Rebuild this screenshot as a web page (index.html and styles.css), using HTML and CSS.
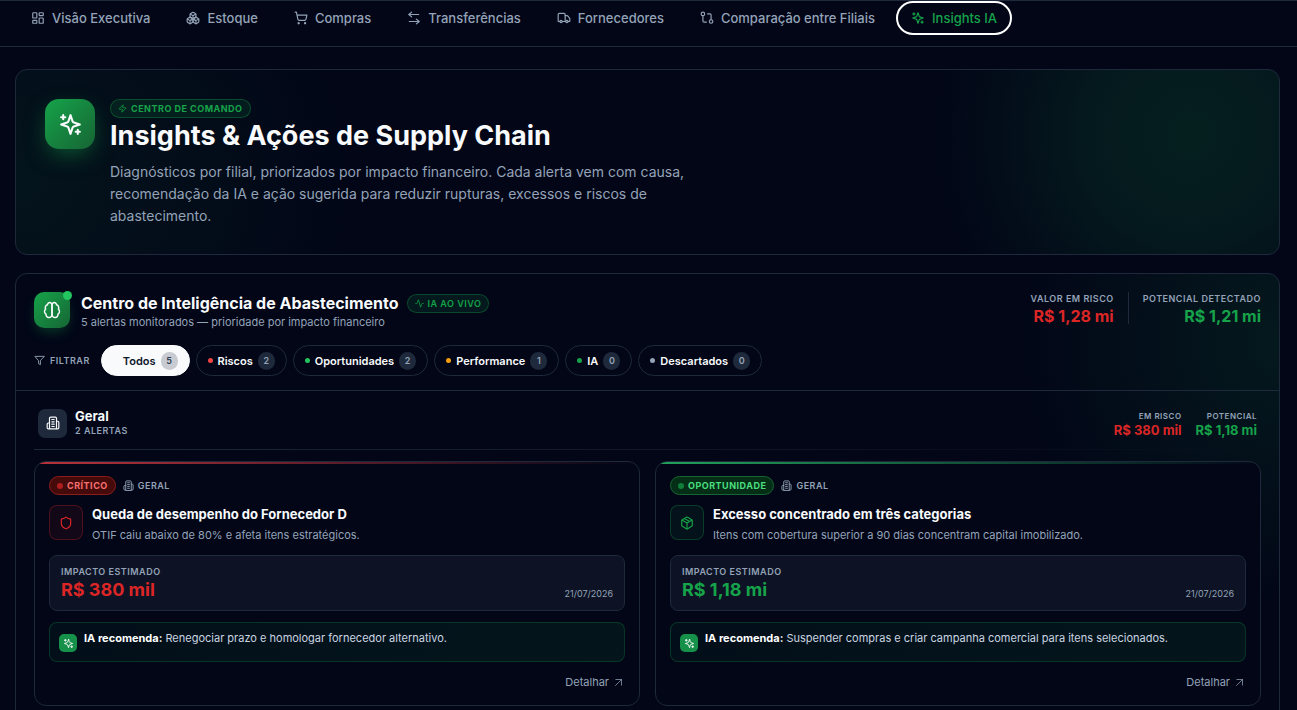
FILE: index.html
```
<!DOCTYPE html>
<html lang="pt-BR">

<head>
    <meta charset="utf-8">
    <meta name="viewport" content="width=device-width, initial-scale=1">
    <title>Insights IA</title>
    <link rel="stylesheet" href="styles.css">
</head>

<body>
    <svg class="sprite" aria-hidden="true">
        <symbol id="dashboard" viewBox="0 0 24 24">
            <rect x="3" y="3" width="7" height="9" rx="1" />
            <rect x="14" y="3" width="7" height="5" rx="1" />
            <rect x="14" y="12" width="7" height="9" rx="1" />
            <rect x="3" y="16" width="7" height="5" rx="1" />
        </symbol>
        <symbol id="boxes" viewBox="0 0 24 24">
            <path d="M2.97 12.92A2 2 0 0 0 2 14.63v3.24a2 2 0 0 0 .97 1.71l3 1.8a2 2 0 0 0 2.06 0L12 19v-5.5l-5-3-4.03 2.42Z" />
            <path d="m7 16.5-4.74-2.85M7 16.5l5-3M7 16.5v5.17" />
            <path d="M12 13.5V19l3.97 2.38a2 2 0 0 0 2.06 0l3-1.8a2 2 0 0 0 .97-1.71v-3.24a2 2 0 0 0-.97-1.71L17 10.5l-5 3Z" />
            <path d="m17 16.5-5-3M17 16.5l4.74-2.85M17 16.5v5.17" />
            <path d="M7.97 4.42A2 2 0 0 0 7 6.13v4.37l5 3 5-3V6.13a2 2 0 0 0-.97-1.71l-3-1.8a2 2 0 0 0-2.06 0l-3 1.8Z" />
            <path d="M12 8 7.26 5.15M12 8l4.74-2.85M12 13.5V8" />
        </symbol>
        <symbol id="cart" viewBox="0 0 24 24">
            <circle cx="8" cy="21" r="1" />
            <circle cx="19" cy="21" r="1" />
            <path d="M2.05 2.05h2l2.66 12.42a2 2 0 0 0 2 1.58h9.78a2 2 0 0 0 1.95-1.57l1.65-7.43H5.12" />
        </symbol>
        <symbol id="transfer" viewBox="0 0 24 24">
            <path d="m16 14 5 4-5 4M21 18H4M8 10 3 6l5-4M3 6h17" />
        </symbol>
        <symbol id="truck" viewBox="0 0 24 24">
            <path d="M14 18V6a2 2 0 0 0-2-2H4a2 2 0 0 0-2 2v11a1 1 0 0 0 1 1h2M15 18H9" />
            <path d="M19 18h2a1 1 0 0 0 1-1v-3.65a1 1 0 0 0-.22-.62l-3.48-4.35A1 1 0 0 0 17.52 8H14" />
            <circle cx="17" cy="18" r="2" />
            <circle cx="7" cy="18" r="2" />
        </symbol>
        <symbol id="compare" viewBox="0 0 24 24">
            <circle cx="5" cy="5" r="3" />
            <path d="M13 5h4a2 2 0 0 1 2 2v8" />
            <circle cx="19" cy="18" r="3" />
            <path d="M11 19H7a2 2 0 0 1-2-2V8" />
        </symbol>
        <symbol id="sparkles" viewBox="0 0 24 24">
            <path d="m12 3-1.91 5.81a2 2 0 0 1-1.28 1.28L3 12l5.81 1.91a2 2 0 0 1 1.28 1.28L12 21l1.91-5.81a2 2 0 0 1 1.28-1.28L21 12l-5.81-1.91a2 2 0 0 1-1.28-1.28Z" />
            <path d="M5 3v4M3 5h4M19 17v4M17 19h4" />
        </symbol>
        <symbol id="zap" viewBox="0 0 24 24">
            <path d="M4 14a1 1 0 0 1-.78-1.63l9.9-10.2a.5.5 0 0 1 .86.46l-1.92 6.02A1 1 0 0 0 13 10h7a1 1 0 0 1 .78 1.63l-9.9 10.2a.5.5 0 0 1-.86-.46l1.92-6.02A1 1 0 0 0 11 14z" />
        </symbol>
        <symbol id="brain" viewBox="0 0 24 24">
            <path d="M12 5a3 3 0 1 0-6 .13 4 4 0 0 0-2.53 5.77 4 4 0 0 0 .56 6.59A4 4 0 1 0 12 18Z" />
            <path d="M12 5a3 3 0 1 1 6 .13 4 4 0 0 1 2.53 5.77 4 4 0 0 1-.56 6.59A4 4 0 1 1 12 18Z" />
        </symbol>
        <symbol id="activity" viewBox="0 0 24 24">
            <path d="M22 12h-2.48a2 2 0 0 0-1.93 1.46l-2.35 8.36a.25.25 0 0 1-.48 0L9.24 2.18a.25.25 0 0 0-.48 0l-2.35 8.36A2 2 0 0 1 4.49 12H2" />
        </symbol>
        <symbol id="filter" viewBox="0 0 24 24">
            <path d="M22 3H2l8 9.46V19l4 2v-8.54Z" />
        </symbol>
        <symbol id="building" viewBox="0 0 24 24">
            <path d="M6 22V4a2 2 0 0 1 2-2h8a2 2 0 0 1 2 2v18ZM6 12H4a2 2 0 0 0-2 2v6a2 2 0 0 0 2 2h2M18 9h2a2 2 0 0 1 2 2v9a2 2 0 0 1-2 2h-2" />
            <path d="M10 6h4M10 10h4M10 14h4M10 18h4" />
        </symbol>
        <symbol id="shield" viewBox="0 0 24 24">
            <path d="M20 13c0 5-3.5 7.5-7.66 8.95a1 1 0 0 1-.67-.01C7.5 20.5 4 18 4 13V6a1 1 0 0 1 1-1c2 0 4.5-1.2 6.24-2.72a1.17 1.17 0 0 1 1.52 0C14.51 3.81 17 5 19 5a1 1 0 0 1 1 1z" />
        </symbol>
        <symbol id="package" viewBox="0 0 24 24">
            <path d="M11 21.73a2 2 0 0 0 2 0l7-4A2 2 0 0 0 21 16V8a2 2 0 0 0-1-1.73l-7-4a2 2 0 0 0-2 0l-7 4A2 2 0 0 0 3 8v8a2 2 0 0 0 1 1.73z" />
            <path d="M12 22V12M3.3 7 12 12l8.7-5M7.5 4.27l9 5.15" />
        </symbol>
        <symbol id="arrow" viewBox="0 0 24 24">
            <path d="M5 4h15v15M20 4 4 20" />
        </symbol>
    </svg>

    <nav class="tabs">
        <a class="tab" href="#"><svg class="icon"><use href="#dashboard" /></svg>Visão Executiva</a>
        <a class="tab" href="#"><svg class="icon"><use href="#boxes" /></svg>Estoque</a>
        <a class="tab" href="#"><svg class="icon"><use href="#cart" /></svg>Compras</a>
        <a class="tab" href="#"><svg class="icon"><use href="#transfer" /></svg>Transferências</a>
        <a class="tab" href="#"><svg class="icon"><use href="#truck" /></svg>Fornecedores</a>
        <a class="tab" href="#"><svg class="icon"><use href="#compare" /></svg>Comparação entre Filiais</a>
        <a class="tab active" href="#" aria-current="page"><svg class="icon"><use href="#sparkles" /></svg>Insights IA</a>
    </nav>

    <main>
        <section class="hero">
            <div class="hero-icon"><svg class="icon"><use href="#sparkles" /></svg></div>
            <div class="hero-text">
                <span class="badge"><svg class="icon"><use href="#zap" /></svg>CENTRO DE COMANDO</span>
                <h1>Insights &amp; Ações de Supply Chain</h1>
                <p>Diagnósticos por filial, priorizados por impacto financeiro. Cada alerta vem com causa, recomendação da IA e ação sugerida para reduzir rupturas, excessos e riscos de abastecimento.</p>
            </div>
        </section>

        <section class="panel">
            <header class="panel-head">
                <div class="panel-top">
                    <div class="panel-icon"><svg class="icon"><use href="#brain" /></svg></div>
                    <div class="panel-title">
                        <div class="title-row">
                            <h2>Centro de Inteligência de Abastecimento</h2>
                            <span class="badge live"><svg class="icon"><use href="#activity" /></svg>IA AO VIVO</span>
                        </div>
                        <p>5 alertas monitorados — prioridade por impacto financeiro</p>
                    </div>
                    <dl class="totals">
                        <div>
                            <dt>VALOR EM RISCO</dt>
                            <dd class="red">R$ 1,28 mi</dd>
                        </div>
                        <div>
                            <dt>POTENCIAL DETECTADO</dt>
                            <dd class="green">R$ 1,21 mi</dd>
                        </div>
                    </dl>
                </div>
                <div class="filters">
                    <span class="filter-label"><svg class="icon"><use href="#filter" /></svg>FILTRAR</span>
                    <button type="button" class="chip selected"><i class="dot"></i>Todos<span class="count">5</span></button>
                    <button type="button" class="chip"><i class="dot dot-red"></i>Riscos<span class="count">2</span></button>
                    <button type="button" class="chip"><i class="dot dot-green"></i>Oportunidades<span class="count">2</span></button>
                    <button type="button" class="chip"><i class="dot dot-amber"></i>Performance<span class="count">1</span></button>
                    <button type="button" class="chip"><i class="dot dot-ia"></i>IA<span class="count">0</span></button>
                    <button type="button" class="chip"><i class="dot dot-gray"></i>Descartados<span class="count">0</span></button>
                </div>
            </header>

            <div class="group">
                <header class="group-head">
                    <div class="group-icon"><svg class="icon"><use href="#building" /></svg></div>
                    <div class="group-title">
                        <h3>Geral</h3>
                        <p>2 ALERTAS</p>
                    </div>
                    <dl class="group-totals">
                        <div>
                            <dt>EM RISCO</dt>
                            <dd class="red">R$ 380 mil</dd>
                        </div>
                        <div>
                            <dt>POTENCIAL</dt>
                            <dd class="green">R$ 1,18 mi</dd>
                        </div>
                    </dl>
                </header>

                <div class="cards">
                    <article class="card critical">
                        <div class="card-tags">
                            <span class="badge tag"><i class="dot"></i>CRÍTICO</span>
                            <span class="branch"><svg class="icon"><use href="#building" /></svg>GERAL</span>
                        </div>
                        <div class="card-head">
                            <div class="card-icon"><svg class="icon"><use href="#shield" /></svg></div>
                            <div>
                                <h4>Queda de desempenho do Fornecedor D</h4>
                                <p>OTIF caiu abaixo de 80% e afeta itens estratégicos.</p>
                            </div>
                        </div>
                        <div class="impact">
                            <div>
                                <span class="impact-label">IMPACTO ESTIMADO</span>
                                <strong class="red">R$ 380 mil</strong>
                            </div>
                            <time datetime="2026-07-21">21/07/2026</time>
                        </div>
                        <div class="advice">
                            <span class="advice-icon"><svg class="icon"><use href="#sparkles" /></svg></span>
                            <p><b>IA recomenda:</b> Renegociar prazo e homologar fornecedor alternativo.</p>
                        </div>
                        <button type="button" class="details">Detalhar<svg class="icon"><use href="#arrow" /></svg></button>
                    </article>

                    <article class="card opportunity">
                        <div class="card-tags">
                            <span class="badge tag"><i class="dot"></i>OPORTUNIDADE</span>
                            <span class="branch"><svg class="icon"><use href="#building" /></svg>GERAL</span>
                        </div>
                        <div class="card-head">
                            <div class="card-icon"><svg class="icon"><use href="#package" /></svg></div>
                            <div>
                                <h4>Excesso concentrado em três categorias</h4>
                                <p>Itens com cobertura superior a 90 dias concentram capital imobilizado.</p>
                            </div>
                        </div>
                        <div class="impact">
                            <div>
                                <span class="impact-label">IMPACTO ESTIMADO</span>
                                <strong class="green">R$ 1,18 mi</strong>
                            </div>
                            <time datetime="2026-07-21">21/07/2026</time>
                        </div>
                        <div class="advice">
                            <span class="advice-icon"><svg class="icon"><use href="#sparkles" /></svg></span>
                            <p><b>IA recomenda:</b> Suspender compras e criar campanha comercial para itens selecionados.</p>
                        </div>
                        <button type="button" class="details">Detalhar<svg class="icon"><use href="#arrow" /></svg></button>
                    </article>
                </div>
            </div>
        </section>
    </main>
</body>

</html>
```
FILE: styles.css
```
* {
    box-sizing: border-box;
}

html {
    scrollbar-width: none;
}

body {
    margin: 0;
    background: #020617;
    color: #f8fafc;
    font-family: Inter, "Liberation Sans", sans-serif;
    font-size: 13px;
}

h1, h2, h3, h4, p, dl, dd {
    margin: 0;
}

button {
    font-family: inherit;
    cursor: pointer;
}

.sprite {
    display: none;
}

.icon {
    width: 14px;
    height: 14px;
    flex: none;
    fill: none;
    stroke: currentColor;
    stroke-width: 2;
    stroke-linecap: round;
    stroke-linejoin: round;
}

.red {
    color: #dc2626;
}

.green {
    color: #16a34a;
}

/* top navigation */
.tabs {
    display: flex;
    gap: 6px;
    padding: 0 16px 11px;
    border-top: 1px solid #1e293b;
    border-bottom: 1px solid #1e293b;
}

.tab {
    display: flex;
    align-items: center;
    gap: 7px;
    height: 34px;
    padding: 0 13px;
    border: 2px solid transparent;
    border-radius: 17px;
    color: #94a3b8;
    font-weight: 500;
    text-decoration: none;
    white-space: nowrap;
}

.tab.active {
    border-color: #fff;
    color: #16a34a;
}

main {
    padding: 22px 17px 18px 15px;
}

/* hero */
.hero {
    display: flex;
    gap: 15px;
    margin-bottom: 18px;
    padding: 29px 29px 27px;
    border: 1px solid #1e293b;
    border-radius: 12px;
    background:
        radial-gradient(circle 260px at 93% 35%, rgba(22, 163, 74, 0.16), rgba(22, 163, 74, 0.12) 40%, rgba(22, 163, 74, 0.03) 80%, transparent),
        radial-gradient(ellipse 340px 300px at 0 60%, rgba(22, 163, 74, 0.09), transparent);
}

.hero-icon {
    display: flex;
    align-items: center;
    justify-content: center;
    flex: none;
    width: 50px;
    height: 50px;
    border-radius: 14px;
    background: linear-gradient(135deg, #16a34a, #166534);
    box-shadow: 0 8px 22px -4px rgba(22, 163, 74, 0.5);
}

.hero-icon .icon {
    width: 25px;
    height: 25px;
}

.badge {
    display: inline-flex;
    align-items: center;
    gap: 4px;
    height: 19px;
    padding: 0 7px;
    border: 1px solid rgba(22, 163, 74, 0.35);
    border-radius: 10px;
    background: rgba(22, 163, 74, 0.12);
    color: #16a34a;
    font-size: 9px;
    font-weight: 700;
    letter-spacing: 0.5px;
    white-space: nowrap;
}

.badge .icon {
    width: 9px;
    height: 9px;
}

.hero-text {
    display: flex;
    flex-direction: column;
    align-items: flex-start;
}

.hero h1 {
    margin-bottom: 7px;
    font-size: 27px;
    line-height: 36px;
}

.hero p {
    max-width: 610px;
    color: #94a3b8;
    font-size: 14px;
    line-height: 22px;
}

/* alerts panel */
.panel {
    border: 1px solid #1e293b;
    border-radius: 12px;
    background: radial-gradient(circle 260px at 100% 70px, rgba(22, 163, 74, 0.12), transparent);
}

.panel-head {
    padding: 18px 18px 14px;
    border-bottom: 1px solid #1e293b;
}

.panel-top {
    display: flex;
    gap: 11px;
    margin-bottom: 15px;
}

.panel-icon {
    position: relative;
    display: flex;
    align-items: center;
    justify-content: center;
    flex: none;
    width: 36px;
    height: 36px;
    border-radius: 10px;
    background: linear-gradient(135deg, #16a34a, #166534);
    box-shadow: 0 6px 14px -4px rgba(22, 163, 74, 0.4);
}

.panel-icon .icon {
    width: 18px;
    height: 18px;
}

.panel-icon::after {
    content: "";
    position: absolute;
    top: -1px;
    right: -2px;
    width: 9px;
    height: 9px;
    border-radius: 50%;
    background: #22c55e;
}

.panel-title {
    flex: 1;
}

.title-row {
    display: flex;
    align-items: center;
    gap: 8px;
}

.panel-title h2 {
    font-size: 16px;
    line-height: 22px;
}

.panel-title p {
    color: #94a3b8;
    font-size: 11px;
    line-height: 16px;
}

.live {
    font-weight: 600;
}

.totals,
.group-totals {
    display: flex;
    text-align: right;
}

.totals div + div {
    margin-left: 14px;
    padding-left: 14px;
    border-left: 1px solid #1e293b;
}

.totals div {
    height: 32px;
}

dt {
    color: #94a3b8;
    font-size: 9px;
    font-weight: 600;
    line-height: 14px;
    letter-spacing: 0.5px;
}

dd {
    font-weight: 700;
}

.totals dd {
    font-size: 16px;
    line-height: 20px;
}

/* filters */
.filters {
    display: flex;
    flex-wrap: wrap;
    align-items: center;
    gap: 6px;
}

.filter-label {
    display: flex;
    align-items: center;
    gap: 5px;
    margin-right: 5px;
    color: #94a3b8;
    font-size: 9px;
    font-weight: 600;
    letter-spacing: 0.5px;
}

.filter-label .icon {
    width: 11px;
    height: 11px;
}

.dot {
    width: 5px;
    height: 5px;
    flex: none;
    border-radius: 50%;
}

.dot-red {
    background: #ef4444;
}

.dot-green {
    background: #22c55e;
}

.dot-amber {
    background: #f59e0b;
}

.dot-ia {
    background: #16a34a;
}

.dot-gray {
    background: #94a3b8;
}

.chip {
    display: flex;
    align-items: center;
    gap: 5px;
    height: 31px;
    padding: 0 11px;
    border: 1px solid #1e293b;
    border-radius: 16px;
    background: transparent;
    color: #f8fafc;
    font-size: 11px;
    font-weight: 600;
}

.chip.selected {
    border-color: #f8fafc;
    background: #f8fafc;
    color: #0f172a;
}

.count {
    min-width: 17px;
    padding: 0 5px;
    border-radius: 9px;
    background: #1e293b;
    color: #94a3b8;
    font-size: 9px;
    line-height: 18px;
}

.chip.selected .count {
    background: #c8cbd2;
    color: #334155;
}

/* group of alerts */
.group {
    padding: 17px 18px 18px;
}

.group-head {
    display: flex;
    align-items: center;
    gap: 8px;
    margin-bottom: 11px;
    padding: 0 4px 11px;
    border-bottom: 1px solid;
    border-image: linear-gradient(90deg, #1e293b, transparent) 1;
}

.group-icon {
    display: flex;
    align-items: center;
    justify-content: center;
    width: 29px;
    height: 29px;
    border-radius: 7px;
    background: #1e293b;
}

.group-title {
    flex: 1;
}

.group-title h3 {
    font-size: 13px;
    line-height: 16px;
}

.group-title p {
    color: #94a3b8;
    font-size: 9px;
    font-weight: 600;
    line-height: 14px;
    letter-spacing: 0.5px;
}

.group-totals {
    gap: 14px;
}

.group-totals dt {
    font-size: 8px;
}

.group-totals dd {
    font-size: 13px;
    line-height: 14px;
}

.cards {
    display: grid;
    grid-template-columns: 1fr 1fr;
    gap: 15px;
}

.card {
    position: relative;
    overflow: hidden;
    padding: 14px;
    border: 1px solid #1e293b;
    border-radius: 12px;
    background: #020617;
}

/* coloured line along the top edge */
.card::before {
    content: "";
    position: absolute;
    top: 0;
    left: 0;
    right: 0;
    height: 2px;
    background: linear-gradient(90deg, var(--line), transparent);
}

.critical {
    --line: #b9323a;
    --accent: #dc2626;
    --tint: rgba(220, 38, 38, 0.08);
    --edge: rgba(220, 38, 38, 0.3);
}

.opportunity {
    --line: #22a35a;
    --accent: #16a34a;
    --tint: rgba(22, 163, 74, 0.08);
    --edge: rgba(22, 163, 74, 0.3);
}

.card-tags {
    display: flex;
    align-items: center;
    gap: 7px;
    margin-bottom: 10px;
}

.tag .dot {
    width: 6px;
    height: 6px;
    background: var(--accent);
    opacity: 0.7;
}

.critical .tag {
    border-color: #8c1d1d;
    background: #450a0a;
    color: #f87171;
}

.opportunity .tag {
    border-color: #166534;
    background: #052e16;
    color: #4ade80;
}

.branch {
    display: flex;
    align-items: center;
    gap: 4px;
    color: #94a3b8;
    font-size: 9px;
    font-weight: 600;
    letter-spacing: 0.5px;
}

.branch .icon {
    width: 11px;
    height: 11px;
}

.card-head {
    display: flex;
    gap: 9px;
    margin-bottom: 11px;
}

.card-icon {
    display: flex;
    align-items: center;
    justify-content: center;
    flex: none;
    width: 34px;
    height: 35px;
    border: 1px solid var(--edge);
    border-radius: 8px;
    background: var(--tint);
    color: var(--accent);
}

.card h4 {
    margin-bottom: 3px;
    font-size: 13px;
    line-height: 18px;
}

.card-head p {
    color: #94a3b8;
    font-size: 11px;
    line-height: 18px;
}

.impact {
    display: flex;
    align-items: flex-end;
    justify-content: space-between;
    margin-bottom: 11px;
    padding: 9px 11px;
    border: 1px solid #1e293b;
    border-radius: 8px;
    background: #0d1324;
}

.impact-label {
    display: block;
    color: #94a3b8;
    font-size: 9px;
    font-weight: 600;
    line-height: 14px;
    letter-spacing: 0.5px;
}

.impact strong {
    display: block;
    font-size: 18px;
    line-height: 22px;
}

.impact time {
    color: #94a3b8;
    font-size: 9px;
    line-height: 14px;
}

.advice {
    display: flex;
    gap: 7px;
    margin-bottom: 11px;
    padding: 6px 9px 9px;
    border: 1px solid rgba(22, 163, 74, 0.25);
    border-radius: 8px;
    background: linear-gradient(135deg, rgba(22, 163, 74, 0.06), rgba(22, 163, 74, 0.1));
}

.advice-icon {
    display: flex;
    align-items: center;
    justify-content: center;
    flex: none;
    width: 18px;
    height: 18px;
    margin-top: 5px;
    border-radius: 5px;
    background: #16914a;
}

.advice-icon .icon {
    width: 11px;
    height: 11px;
}

.advice p {
    color: #cbd5e1;
    font-size: 11px;
    line-height: 18px;
}

.advice b {
    color: #fff;
}

.details {
    display: flex;
    align-items: center;
    gap: 5px;
    margin-left: auto;
    padding: 0 2px;
    border: 0;
    background: none;
    color: #94a3b8;
    font-size: 11px;
    line-height: 18px;
}

.details .icon {
    width: 9px;
    height: 9px;
}
```
